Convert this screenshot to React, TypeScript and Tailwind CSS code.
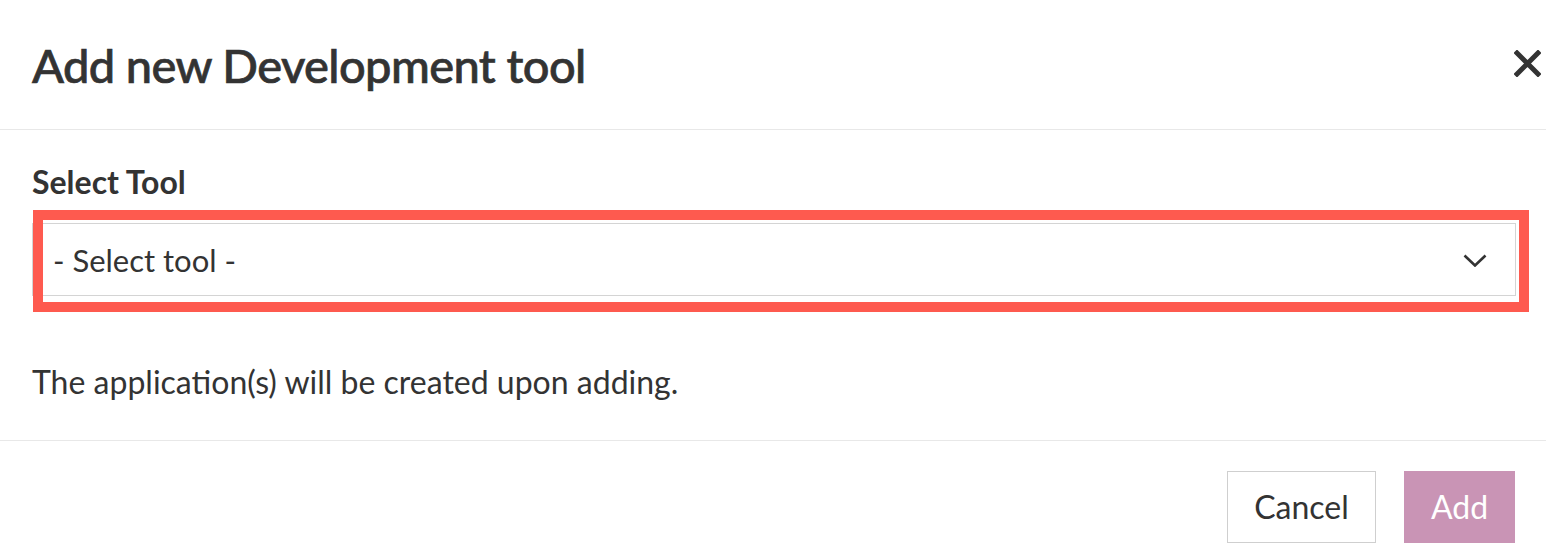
import React from "react";

export default function App() {
  return (
    <div
      className="w-[1546px] h-[556px] bg-white text-[#333333] flex flex-col overflow-hidden"
      style={{ fontFamily: "Lato, 'Open Sans', sans-serif" }}
    >
      <div className="h-[130px] shrink-0 border-b border-[#e8e8e8] flex items-center justify-between pl-8 pr-[5px]">
        <h1 className="text-[47px] leading-[58px] font-medium tracking-[-0.6px] [-webkit-text-stroke:0.7px_#333333]">Add new Development tool</h1>
        <button className="w-[27px] h-[27px] mb-[2px] text-[#333333]" aria-label="Close">
          <svg viewBox="0 0 27 27" width="27" height="27">
            <path d="M3 3 L24 24 M24 3 L3 24" stroke="currentColor" strokeWidth="5" strokeLinecap="square" fill="none" />
          </svg>
        </button>
      </div>

      <div className="h-[311px] shrink-0 border-b border-[#e8e8e8] pl-8 pr-[30px] pt-[33px]">
        <div className="text-[32px] leading-[38px] font-bold">Select Tool</div>
        <div className="relative mt-[22px]">
          <div className="h-[73px] border border-[#d4d4d4] flex items-center justify-between pl-[20px] pr-[28px]">
            <span className="text-[31px] leading-[36px] mt-[1px]">- Select tool -</span>
            <svg viewBox="0 0 24 13" width="24" height="13" className="mt-[1px]">
              <path d="M1.5 1.5 L12 11.5 L22.5 1.5" stroke="#333333" strokeWidth="2.6" fill="none" />
            </svg>
          </div>
          <div className="absolute left-[1px] -top-[13px] w-[1496px] h-[102px] border-[10px] border-[#fe5a4f] pointer-events-none" />
        </div>
        <p className="mt-[67px] text-[32px] leading-[38px]">The application(s) will be created upon adding.</p>
      </div>

      <div className="flex justify-end gap-[28px] pt-[30px] pr-[31px]">
        <button className="h-[72px] w-[149px] border border-[#cfcfcf] bg-white text-[32px] text-[#333333]">Cancel</button>
        <button className="h-[72px] w-[111px] bg-[#c994b5] text-[32px] text-white">Add</button>
      </div>
    </div>
  );
}
